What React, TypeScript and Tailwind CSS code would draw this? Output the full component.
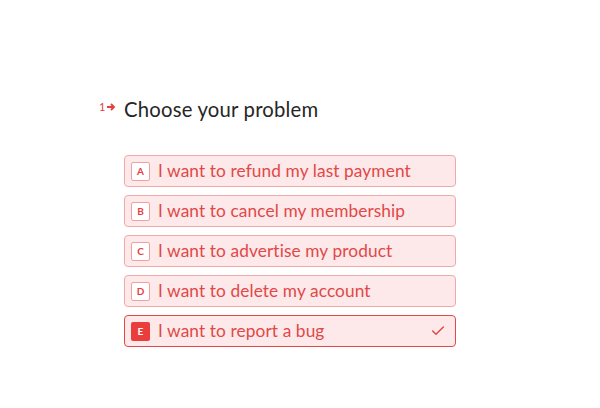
import { Check } from "lucide-react";

const options = [
  { key: "A", label: "I want to refund my last payment" },
  { key: "B", label: "I want to cancel my membership" },
  { key: "C", label: "I want to advertise my product" },
  { key: "D", label: "I want to delete my account" },
  { key: "E", label: "I want to report a bug", selected: true },
];

export default function App() {
  return (
    <div className="w-[600px] h-[408px] bg-white font-['Lato',sans-serif] pt-[97px] pl-[99px]">
      <div className="flex items-center">
        <span className="w-[25px] flex items-center text-[#e53e3e] text-[11px] -mt-[4px]">
          1
          <svg width="10" height="10" viewBox="0 0 10 10" className="ml-[1px]">
            <path d="M1 5h7M5 2l3 3-3 3" stroke="#e53e3e" strokeWidth="1.8" fill="none" />
          </svg>
        </span>
        <h1 className="text-[20.3px] text-[#262627] leading-[24px] tracking-[0.2px]">Choose your problem</h1>
      </div>
      <div className="mt-[34px] ml-[25px] flex flex-col gap-[8px] w-[332px]">
        {options.map((o) => (
          <div
            key={o.key}
            className={`h-[32px] rounded-[4px] bg-[#fde9e9] flex items-center px-[6px] ${
              o.selected ? "border-[1.5px] border-[#e24a4a]" : "border border-[#f1aaaa]"
            }`}
          >
            <span
              className={`w-[19px] h-[19px] rounded-[2px] flex items-center justify-center text-[10px] font-bold ${
                o.selected ? "bg-[#ec3d3d] text-white" : "bg-white border border-[#f0a0a0] text-[#e53e3e]"
              }`}
            >
              {o.key}
            </span>
            <span className="ml-[8px] text-[17.3px] tracking-[0.1px] text-[#e14848] flex-1">{o.label}</span>
            {o.selected && <Check size={16} strokeWidth={2.2} className="text-[#e14848] mr-[3px]" />}
          </div>
        ))}
      </div>
    </div>
  );
}
